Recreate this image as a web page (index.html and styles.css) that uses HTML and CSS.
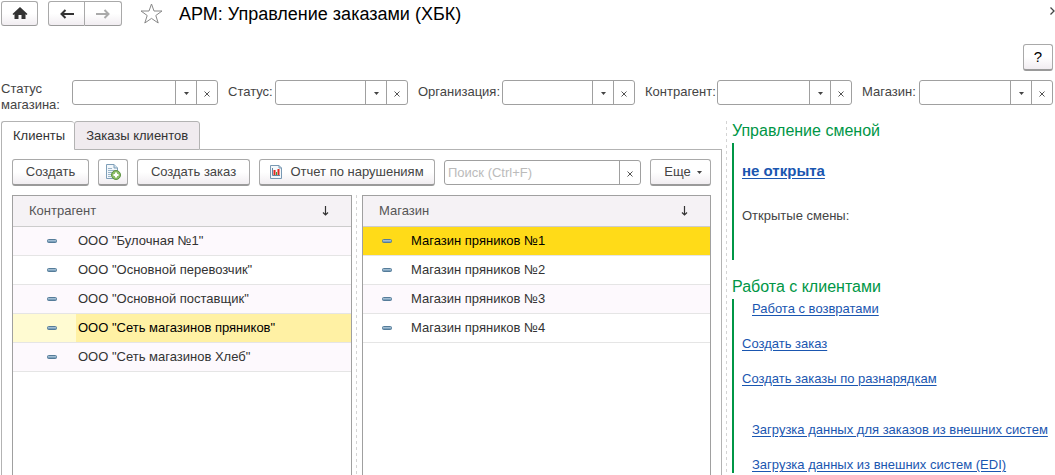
FILE: index.html
```html
<!DOCTYPE html>
<html lang="ru">
<head>
<meta charset="utf-8">
<title>АРМ: Управление заказами (ХБК)</title>
<link rel="stylesheet" href="styles.css">
</head>
<body>
<svg class="defs" aria-hidden="true">
  <defs>
    <linearGradient id="dash" x1="0" y1="0" x2="0" y2="1">
      <stop offset="0" stop-color="#c3d7e6"/><stop offset="1" stop-color="#5b87a8"/>
    </linearGradient>
    <symbol id="item" viewBox="0 0 10 4">
      <rect x=".5" y=".5" width="9" height="3" rx="1" fill="url(#dash)" stroke="#557c99"/>
    </symbol>
    <symbol id="sort" viewBox="0 0 7 10">
      <path d="M3.5 0V9M1 6.5L3.5 9L6 6.5" fill="none" stroke="#333" stroke-width="1.2"/>
    </symbol>
    <symbol id="caret" viewBox="0 0 5 3"><path d="M0 0H5L2.5 3Z" fill="#444"/></symbol>
    <symbol id="clear" viewBox="0 0 6 6"><path d="M.5 .5L5.5 5.5M5.5 .5L.5 5.5" stroke="#555" fill="none"/></symbol>
  </defs>
</svg>
<div class="app">
  <header class="titlebar">
    <button class="btn home" aria-label="Домой">
      <svg width="16" height="13" viewBox="0 0 16 13"><path d="M8 0L15.500 7L14.500 8L13.500 7.300V12H9.500V8H6.500V12H2.500V7.300L1.500 8L.5 7Z" fill="#333"/></svg>
    </button>
    <div class="nav">
      <button class="btn" aria-label="Назад"><svg width="14" height="10" viewBox="0 0 14 10"><path d="M14 5H2M5.500 1L1.500 5L5.500 9" fill="none" stroke="#333" stroke-width="2"/></svg></button>
      <button class="btn" aria-label="Вперед"><svg width="14" height="10" viewBox="0 0 14 10"><path d="M0 5H12M8.500 1L12.500 5L8.500 9" fill="none" stroke="#aaa" stroke-width="2"/></svg></button>
    </div>
    <button class="plain star" aria-label="В избранное">
      <svg width="23" height="21" viewBox="0 0 23 21"><path d="M11.500 1L14 8H22L15.800 12.500L18.200 20L11.500 15.400L4.800 20L7.200 12.500L1 8H9Z" fill="none" stroke="#888"/></svg>
    </button>
    <h1>АРМ: Управление заказами (ХБК)</h1>
    <button class="plain more" aria-label="Дополнительно"><svg width="5" height="8" viewBox="0 0 5 8"><path d="M.5 .5L4 4L.5 7.500" fill="none" stroke="#444" stroke-width="1.300"/></svg></button>
  </header>

  <div class="helpbar"><button class="btn help">?</button></div>

  <form class="filters">
    <div class="filter"><label class="l1" for="f1">Статус магазина:</label><div class="field"><input id="f1" type="text"><button type="button" aria-label="Выбрать"><svg width="5" height="3"><use href="#caret"/></svg></button><button type="button" aria-label="Очистить"><svg width="6" height="6"><use href="#clear"/></svg></button></div></div>
    <div class="filter"><label class="l2" for="f2">Статус:</label><div class="field"><input id="f2" type="text"><button type="button" aria-label="Выбрать"><svg width="5" height="3"><use href="#caret"/></svg></button><button type="button" aria-label="Очистить"><svg width="6" height="6"><use href="#clear"/></svg></button></div></div>
    <div class="filter"><label class="l3" for="f3">Организация:</label><div class="field"><input id="f3" type="text"><button type="button" aria-label="Выбрать"><svg width="5" height="3"><use href="#caret"/></svg></button><button type="button" aria-label="Очистить"><svg width="6" height="6"><use href="#clear"/></svg></button></div></div>
    <div class="filter"><label class="l4" for="f4">Контрагент:</label><div class="field"><input id="f4" type="text"><button type="button" aria-label="Выбрать"><svg width="5" height="3"><use href="#caret"/></svg></button><button type="button" aria-label="Очистить"><svg width="6" height="6"><use href="#clear"/></svg></button></div></div>
    <div class="filter"><label class="l5" for="f5">Магазин:</label><div class="field"><input id="f5" type="text"><button type="button" aria-label="Выбрать"><svg width="5" height="3"><use href="#caret"/></svg></button><button type="button" aria-label="Очистить"><svg width="6" height="6"><use href="#clear"/></svg></button></div></div>
  </form>

  <main class="main">
    <section class="workspace">
      <div class="tabs" role="tablist">
        <button class="tab active" role="tab" aria-selected="true">Клиенты</button>
        <button class="tab" role="tab" aria-selected="false">Заказы клиентов</button>
        <span class="tabs-line"></span>
      </div>
      <div class="panel">
        <div class="toolbar">
          <button class="btn create">Создать</button>
          <button class="btn copy" aria-label="Создать копированием">
            <svg width="16" height="16" viewBox="0 0 16 16"><path d="M1.500 .5H9L12.500 4V14.500H1.500Z" fill="#f2f7fb" stroke="#7f9fb8"/><path d="M9 .5V4H12.500" fill="#cfe0ec" stroke="#7f9fb8"/><path d="M3 4.500H7M3 6.500H10M3 8.500H8M3 10.500H6M3 12.500H6" stroke="#9ab4c8"/><circle cx="11" cy="11" r="4.500" fill="#8dbd68" stroke="#5b9340"/><path d="M11 8.500V13.500M8.500 11H13.500" stroke="#fff" stroke-width="2"/></svg>
          </button>
          <button class="btn order">Создать заказ</button>
          <button class="btn report">
            <svg width="12" height="14" viewBox="0 0 12 14"><path d="M.5 .5H9L11.500 3V13.500H.5Z" fill="#f4f8fb" stroke="#7899b3"/><path d="M9 .5V3H11.500" fill="none" stroke="#7899b3"/><path d="M2.500 3V10.500H10" fill="none" stroke="#6688a3"/><path d="M4.500 5V10" stroke="#e02b20" stroke-width="2"/><path d="M6.500 7V10" stroke="#37a437"/><path d="M8.500 4V10" stroke="#e02b20" stroke-width="2"/></svg>
            Отчет по нарушениям
          </button>
          <div class="field search"><input type="search" aria-label="Поиск" placeholder="Поиск (Ctrl+F)"><button aria-label="Очистить"><svg width="6" height="6"><use href="#clear"/></svg></button></div>
          <button class="btn menu">Еще <svg width="5" height="3"><use href="#caret"/></svg></button>
        </div>
        <div class="lists">
          <div class="list clients">
            <table>
              <thead><tr><th class="name" colspan="2"><span class="head">Контрагент<svg width="7" height="10"><use href="#sort"/></svg></span></th></tr></thead>
              <tbody>
                <tr><td class="mark"><svg width="10" height="4"><use href="#item"/></svg></td><td>ООО "Булочная №1"</td></tr>
                <tr><td class="mark"><svg width="10" height="4"><use href="#item"/></svg></td><td>ООО "Основной перевозчик"</td></tr>
                <tr><td class="mark"><svg width="10" height="4"><use href="#item"/></svg></td><td>ООО "Основной поставщик"</td></tr>
                <tr class="selected"><td class="mark"><svg width="10" height="4"><use href="#item"/></svg></td><td>ООО "Сеть магазинов пряников"</td></tr>
                <tr><td class="mark"><svg width="10" height="4"><use href="#item"/></svg></td><td>ООО "Сеть магазинов Хлеб"</td></tr>
              </tbody>
            </table>
          </div>
          <div class="splitter"></div>
          <div class="list shops">
            <table>
              <thead><tr><th class="name" colspan="2"><span class="head">Магазин<svg width="7" height="10"><use href="#sort"/></svg></span></th></tr></thead>
              <tbody>
                <tr class="current"><td class="mark"><svg width="10" height="4"><use href="#item"/></svg></td><td>Магазин пряников №1</td></tr>
                <tr><td class="mark"><svg width="10" height="4"><use href="#item"/></svg></td><td>Магазин пряников №2</td></tr>
                <tr><td class="mark"><svg width="10" height="4"><use href="#item"/></svg></td><td>Магазин пряников №3</td></tr>
                <tr><td class="mark"><svg width="10" height="4"><use href="#item"/></svg></td><td>Магазин пряников №4</td></tr>
              </tbody>
            </table>
          </div>
        </div>
      </div>
    </section>
    <div class="splitter"></div>
    <aside class="side">
      <h2>Управление сменой</h2>
      <div class="group shift">
        <a class="state" href="#">не открыта</a>
        <p>Открытые смены:</p>
      </div>
      <h2>Работа с клиентами</h2>
      <div class="group links">
        <a class="indent" href="#">Работа с возвратами</a>
        <a href="#">Создать заказ</a>
        <a href="#">Создать заказы по разнарядкам</a>
        <a class="indent apart" href="#">Загрузка данных для заказов из внешних систем</a>
        <a class="indent" href="#">Загрузка данных из внешних систем (EDI)</a>
      </div>
    </aside>
  </main>
</div>
</body>
</html>
```
FILE: styles.css
```css
* { box-sizing: border-box; }

body {
  margin: 0;
  background: #fff;
  color: #444;
  font: 13px/16px "Liberation Sans", Arial, sans-serif;
}

button, input { font: inherit; color: inherit; margin: 0; }
svg { display: block; flex: none; }
.defs { position: absolute; width: 0; height: 0; }

.app {
  display: flex;
  flex-direction: column;
  min-height: 100vh;
  padding: 1px 2px 0 1px;
}

.btn {
  display: flex;
  align-items: center;
  justify-content: center;
  height: 27px;
  padding: 0;
  border: 1px solid #a9a9a9;
  border-bottom: 2px solid #9a9a9a;
  border-radius: 3px;
  background: linear-gradient(#fff 50%, #f1edf1);
  white-space: nowrap;
}

.plain { border: 0; padding: 0; background: none; }

.titlebar { display: flex; align-items: center; height: 25px; margin-right: -2px; }
.titlebar .btn { height: 25px; width: 37px; border-bottom-width: 1px; }
.nav { display: flex; margin-left: 10px; }
.nav .btn:first-child { border-radius: 3px 0 0 3px; }
.nav .btn:last-child { border-left: 0; border-radius: 0 3px 3px 0; }
.star { margin-left: 18px; }
h1 { margin: 0 auto 0 16px; font-size: 18px; line-height: 24px; font-weight: 400; color: #000; }
.more { align-self: flex-start; margin-top: 6px; }

.helpbar { display: flex; justify-content: flex-end; margin-top: 18px; }
.help { width: 30px; color: #000; font-size: 15px; }

.filters {
  display: grid;
  grid-template-columns: 217fr 180fr 217fr 207fr 191fr;
  gap: 10px;
  margin-top: 9px;
}
.filter { display: flex; align-items: flex-start; min-width: 0; }
.filter label { flex: none; padding-top: 4px; }
.filter .l1 { width: 71px; padding: 1px 10px 0 0; }
.l2 { width: 47px; }
.l3 { width: 84px; }
.l4 { width: 72px; }
.l5 { width: 57px; }

.field {
  display: flex;
  flex: 1;
  min-width: 0;
  height: 25px;
  border: 1px solid #a0a0a0;
  border-radius: 3px;
  background: #fff;
}
.field input { flex: 1; width: 0; min-width: 0; border: 0; padding: 0 3px; background: none; outline: 0; }
.field input::placeholder { color: #bbb; opacity: 1; }
.field button {
  display: flex;
  flex: none;
  align-items: center;
  justify-content: center;
  width: 21px;
  padding: 2px 0 0;
  border: 0;
  border-left: 1px solid #a0a0a0;
  background: none;
}

.main { display: flex; flex: 1; margin-top: 8px; }
.workspace { display: flex; flex-direction: column; flex: 1; min-width: 0; }

.tabs { display: flex; height: 29px; }
.tab {
  padding: 0 11px;
  border: 1px solid #b3b3b3;
  border-radius: 3px 3px 0 0;
  background: #f0ebef;
  color: #333;
}
.tab.active { padding-right: 9px; border-bottom: 0; border-right: 0; background: #fff; }
.tabs-line { flex: 1; border-bottom: 1px solid #b3b3b3; }

.panel {
  display: flex;
  flex-direction: column;
  flex: 1;
  padding: 9px 10px 0;
  border: solid #b3b3b3;
  border-width: 0 1px;
}
.toolbar { display: flex; gap: 9px; }
.create { width: 77px; }
.copy { width: 30px; }
.order { width: 113px; }
.report { width: 176px; gap: 8px; }
.search { height: 25px; margin-top: 1px; }
.menu { width: 61px; gap: 6px; padding-left: 5px; }

.lists { display: flex; flex: 1; margin-top: 9px; }
.list { border: 1px solid #a0a0a0; border-bottom: 0; min-width: 0; }
.clients { flex: 340 1 0; }
.shops { flex: 349 1 0; }

.splitter {
  flex: none;
  width: 1px;
  margin: 0 5px 0 4px;
  background: repeating-linear-gradient(#d4d4d4 0 3px, transparent 3px 6px);
}

table { width: 100%; border-collapse: collapse; color: #333; }
th {
  height: 30px;
  padding: 0 22px 0 16px;
  border-bottom: 1px solid #ccc;
  background: #f5f2f5;
  color: #555;
  font-weight: 400;
  text-align: left;
}
.head { display: flex; align-items: center; justify-content: space-between; }
td { height: 29px; padding: 0 2px; border-bottom: 1px solid #e5e5e5; }
tbody tr:nth-child(odd) { background: #fdf9fd; }
.mark { width: 63px; padding: 0 0 0 34px; }
.shops .mark { width: 46px; padding-left: 19px; }
tbody tr.selected { background: #fff1a4; color: #000; }
.selected .mark { background: #fffbd2; }
tbody tr.current { background: #ffdb18; color: #000; }

.side { width: 321px; flex: none; }
h2 { margin: 0; font-size: 16px; line-height: 19px; font-weight: 400; color: #009646; }
.group {
  display: flex;
  flex-direction: column;
  align-items: flex-start;
  margin-top: 3px;
  padding-left: 8px;
  border-left: 2px solid #009646;
}
.shift { height: 117px; margin-bottom: 17px; padding-top: 20px; }
.shift p { margin: 29px 0 0; }
a { color: #1a56b0; text-underline-offset: 2px; white-space: nowrap; }
.state { font-size: 15px; font-weight: 700; }
.links { gap: 19px; padding-top: 2px; }
.indent { margin-left: 10px; }
.apart { margin-top: 16px; }
```
